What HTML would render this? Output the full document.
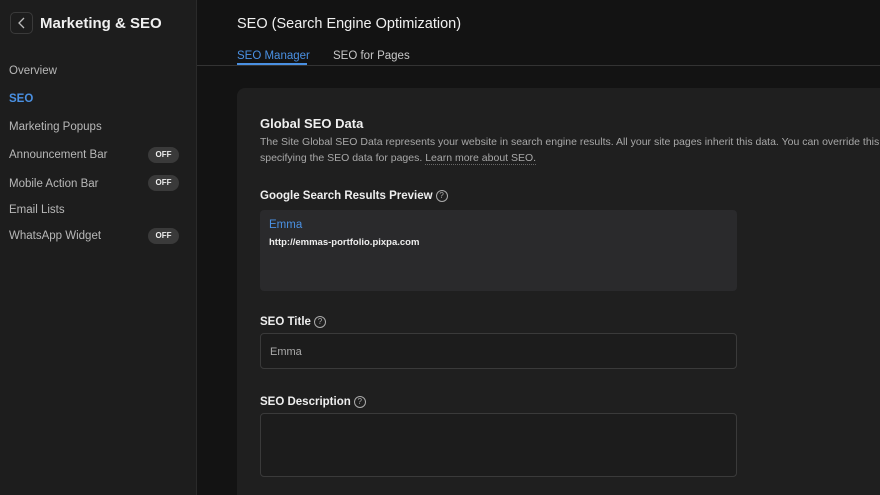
<!DOCTYPE html>
<html><head><style>
*{margin:0;padding:0;box-sizing:border-box}
html,body{width:880px;height:495px;overflow:hidden}
body{background:#131313;font-family:"Liberation Sans",sans-serif;position:relative;color:#e8e8e8}
.side{position:absolute;left:0;top:0;width:197px;height:495px;background:#1d1d1d;border-right:1px solid #2a2a2a}
.back{position:absolute;left:10px;top:12px;width:23px;height:22px;border:1px solid #3a3a3a;border-radius:5px}
.back svg{position:absolute;left:6px;top:4px}
.st{position:absolute;left:40px;top:15px;font-size:15px;font-weight:bold;color:#f0f0f0}
.it{position:absolute;left:9px;font-size:11.5px;color:#b8b8b8}
.off{position:absolute;left:148px;width:31px;height:16px;border-radius:8px;background:#3a3a3a;color:#eee;font-size:8px;font-weight:bold;text-align:center;line-height:16px}
.abs{position:absolute}
.card{position:absolute;left:237px;top:88px;width:660px;height:407px;background:#1f1f1f;border-radius:8px 0 0 0}
.q{display:inline-block;width:12px;height:12px;border:1px solid #aaa;border-radius:50%;font-size:8px;text-align:center;line-height:10px;color:#aaa;font-weight:normal;vertical-align:1px;margin-left:3px}
.lbl{position:absolute;font-size:11.5px;font-weight:bold;color:#eee}
</style></head><body>
<div class="side">
<div class="back"><svg width="10" height="12" viewBox="0 0 10 12"><path d="M7 1L2 6l5 5" stroke="#bbb" stroke-width="1.3" fill="none"/></svg></div>
<div class="st">Marketing &amp; SEO</div>
<div class="it" style="top:65px">Overview</div>
<div class="it" style="top:93px;color:#4a90e2;font-weight:bold">SEO</div>
<div class="it" style="top:121px">Marketing Popups</div>
<div class="it" style="top:149px">Announcement Bar</div>
<div class="off" style="top:147px">OFF</div>
<div class="it" style="top:178px">Mobile Action Bar</div>
<div class="off" style="top:175px">OFF</div>
<div class="it" style="top:204px">Email Lists</div>
<div class="it" style="top:230px">WhatsApp Widget</div>
<div class="off" style="top:228px">OFF</div>
</div>
<div class="abs" style="left:237px;top:16px;font-size:14.5px;color:#f0f0f0">SEO (Search Engine Optimization)</div>
<div class="abs" style="left:237px;top:50px;font-size:11.5px;color:#4a90e2">SEO Manager</div>
<div class="abs" style="left:237px;top:63px;width:70px;height:2px;background:#4a90e2"></div>
<div class="abs" style="left:333px;top:50px;font-size:11.5px;color:#c8c8c8">SEO for Pages</div>
<div class="abs" style="left:197px;top:65px;width:683px;height:1px;background:#333"></div>
<div class="card"></div>
<div class="abs" style="left:260px;top:116px;font-size:13px;font-weight:bold;color:#f0f0f0">Global SEO Data</div>
<div class="abs" style="left:260px;top:134px;width:640px;font-size:10.5px;line-height:16px;color:#a8a8a8;white-space:nowrap">The Site Global SEO Data represents your website in search engine results. All your site pages inherit this data. You can override this by<br>specifying the SEO data for pages. <span style="border-bottom:1px dotted #666">Learn more about SEO.</span></div>
<div class="lbl" style="left:260px;top:190px">Google Search Results Preview<span class="q">?</span></div>
<div class="abs" style="left:260px;top:210px;width:477px;height:81px;background:#2a2a2c;border-radius:4px"></div>
<div class="abs" style="left:269px;top:219px;font-size:11.5px;color:#4a90e2">Emma</div>
<div class="abs" style="left:269px;top:237px;font-size:9.5px;color:#eee;font-weight:bold">http://emmas-portfolio.pixpa.com</div>
<div class="lbl" style="left:260px;top:316px">SEO Title<span class="q">?</span></div>
<div class="abs" style="left:260px;top:333px;width:477px;height:36px;border:1px solid #3a3a3a;border-radius:4px;background:#1c1c1c"></div>
<div class="abs" style="left:270px;top:346px;font-size:11px;color:#aaa">Emma</div>
<div class="lbl" style="left:260px;top:396px">SEO Description<span class="q">?</span></div>
<div class="abs" style="left:260px;top:413px;width:477px;height:64px;border:1px solid #3a3a3a;border-radius:4px;background:#1c1c1c"></div>
</body></html>
